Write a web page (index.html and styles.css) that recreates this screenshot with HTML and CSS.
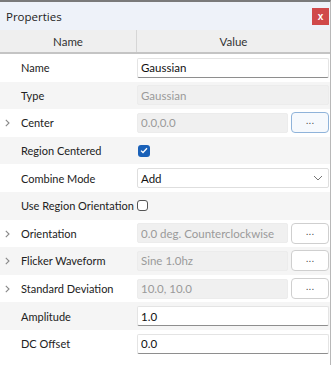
FILE: index.html
```html
<!DOCTYPE html>
<html lang="en">
<head>
    <meta charset="UTF-8">
    <title>Properties</title>
    <link rel="stylesheet" href="styles.css">
</head>
<body>
    <div class="panel">
        <div class="titlebar">
            <span class="title">Properties</span>
            <button class="close" type="button">x</button>
        </div>

        <div class="header">
            <div class="head-cell">Name</div>
            <div class="head-cell">Value</div>
        </div>

        <div class="rows">
            <div class="row">
                <div class="name">Name</div>
                <div class="value"><input class="field" type="text" value="Gaussian"></div>
            </div>
            <div class="row alt">
                <div class="name">Type</div>
                <div class="value"><input class="field" type="text" value="Gaussian" disabled></div>
            </div>
            <div class="row">
                <div class="name">
                    <svg class="chev" width="5" height="8" viewBox="0 0 5 8"><path d="M0.8 0.8 L4 4 L0.8 7.2" fill="none" stroke="#888" stroke-width="1.1"/></svg>
                    Center
                </div>
                <div class="value split">
                    <input class="field" type="text" value="0.0,0.0" disabled>
                    <button class="dots focus" type="button">...</button>
                </div>
            </div>
            <div class="row alt">
                <div class="name">Region Centered</div>
                <div class="value">
                    <span class="check on">
                        <svg width="8" height="7" viewBox="0 0 8 7"><path d="M1 3.6 L3 5.5 L7 1.2" fill="none" stroke="#fff" stroke-width="1.3"/></svg>
                    </span>
                </div>
            </div>
            <div class="row">
                <div class="name">Combine Mode</div>
                <div class="value">
                    <div class="select">
                        <span>Add</span>
                        <svg width="10" height="6" viewBox="0 0 10 6"><path d="M1 1 L5 5 L9 1" fill="none" stroke="#777" stroke-width="1"/></svg>
                    </div>
                </div>
            </div>
            <div class="row alt">
                <div class="name wide">Use Region Orientation<span class="check"></span></div>
                <div class="value"></div>
            </div>
            <div class="row">
                <div class="name">
                    <svg class="chev" width="5" height="8" viewBox="0 0 5 8"><path d="M0.8 0.8 L4 4 L0.8 7.2" fill="none" stroke="#888" stroke-width="1.1"/></svg>
                    Orientation
                </div>
                <div class="value split">
                    <input class="field" type="text" value="0.0 deg. Counterclockwise" disabled>
                    <button class="dots" type="button">...</button>
                </div>
            </div>
            <div class="row alt">
                <div class="name">
                    <svg class="chev" width="5" height="8" viewBox="0 0 5 8"><path d="M0.8 0.8 L4 4 L0.8 7.2" fill="none" stroke="#888" stroke-width="1.1"/></svg>
                    Flicker Waveform
                </div>
                <div class="value split">
                    <input class="field" type="text" value="Sine 1.0hz" disabled>
                    <button class="dots" type="button">...</button>
                </div>
            </div>
            <div class="row">
                <div class="name">
                    <svg class="chev" width="5" height="8" viewBox="0 0 5 8"><path d="M0.8 0.8 L4 4 L0.8 7.2" fill="none" stroke="#888" stroke-width="1.1"/></svg>
                    Standard Deviation
                </div>
                <div class="value split">
                    <input class="field" type="text" value="10.0, 10.0" disabled>
                    <button class="dots" type="button">...</button>
                </div>
            </div>
            <div class="row alt">
                <div class="name">Amplitude</div>
                <div class="value"><input class="field" type="text" value="1.0"></div>
            </div>
            <div class="row">
                <div class="name">DC Offset</div>
                <div class="value"><input class="field" type="text" value="0.0"></div>
            </div>
        </div>
    </div>
</body>
</html>
```

FILE: styles.css
```css
/* Page */
body {
    margin: 0;
    background: #fff;
    font-family: 'Lato', sans-serif;
    font-size: 11px;
    color: #222;
}

/* Panel */
.panel {
    width: 331px;
    height: 365px;
    box-sizing: border-box;
    border-top: 2px solid #7a7a7a;
    border-right: 1px solid #b8b8b8;
}

/* Title Bar */
.titlebar {
    height: 28px;
    display: flex;
    align-items: center;
    justify-content: space-between;
    padding: 0 1px 0 6px;
    background: #eef2f9;
}

.title {
    font-family: 'Open Sans', sans-serif;
    font-size: 11.5px;
    color: #222;
}

.close {
    width: 17px;
    height: 17px;
    padding: 0;
    border: none;
    background: #d0494a;
    color: #fff;
    font-family: 'Liberation Sans', sans-serif;
    font-size: 10px;
    font-weight: bold;
    line-height: 15px;
}

/* Column Header */
.header {
    display: grid;
    grid-template-columns: 136px minmax(0, 1fr);
    height: 22px;
    background: #efefef;
    border-bottom: 2px solid #c4c4c4;
    font-size: 11.5px;
}

.head-cell {
    display: flex;
    align-items: center;
    justify-content: center;
    color: #333;
}

.head-cell + .head-cell {
    border-left: 1px solid #d6d6d6;
}

/* Rows */
.row {
    display: grid;
    grid-template-columns: 136px minmax(0, 1fr);
    height: 27.6px;
    background: #fff;
}

.row.alt {
    background: #f5f5f5;
}

.name {
    position: relative;
    display: flex;
    align-items: center;
    padding-left: 21px;
    white-space: nowrap;
}

.chev {
    position: absolute;
    left: 5px;
    top: 10px;
}

.value {
    display: flex;
    align-items: center;
    min-width: 0;
    padding: 0 1px;
}

.value.split {
    gap: 3px;
}

/* Inputs */
.field {
    flex: 1;
    width: 0;
    min-width: 0;
    height: 20px;
    box-sizing: border-box;
    padding: 0 3px;
    border: 1px solid #e4e4e4;
    border-bottom-color: #8e8e8e;
    border-radius: 2px;
    background: #fff;
    font-family: 'Lato', sans-serif;
    font-size: 11.5px;
    color: #111;
}

.field:disabled {
    background: #f0f0f0;
    border-color: #ececec;
    color: #9a9a9a;
}

.dots {
    flex: 0 0 38px;
    height: 21px;
    padding: 0 0 4px;
    border: 1px solid #cfcfcf;
    border-radius: 4px;
    background: #fff;
    font-size: 10px;
    color: #444;
}

.dots.focus {
    border-color: #8fb3da;
    background: #f6f9fd;
}

/* Checkboxes */
.check {
    display: inline-flex;
    flex-shrink: 0;
    align-items: center;
    justify-content: center;
    width: 11px;
    height: 11px;
    box-sizing: border-box;
    border: 1px solid #555;
    border-radius: 3px;
    background: #fff;
}

.check.on {
    width: 12px;
    height: 12px;
    margin-left: 1px;
    border: none;
    background: #1a61b8;
}

.name.wide .check {
    margin-left: 3px;
}

/* Dropdown */
.select {
    flex: 1;
    height: 20px;
    box-sizing: border-box;
    display: flex;
    align-items: center;
    justify-content: space-between;
    padding: 0 5px 0 3px;
    border: 1px solid #dedede;
    border-radius: 2px;
    background: #fff;
    font-size: 11.5px;
    color: #111;
}
```
